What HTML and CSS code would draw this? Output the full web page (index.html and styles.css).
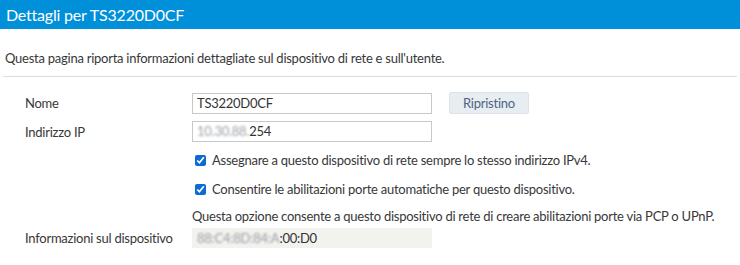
FILE: index.html
```html
<!DOCTYPE html>
<html lang="it">
<head>
<meta charset="utf-8">
<title>Dettagli per TS3220D0CF</title>
<link rel="stylesheet" href="styles.css">
</head>
<body>
<div class="page">
  <header class="titlebar">Dettagli per TS3220D0CF</header>
  <p class="intro">Questa pagina riporta informazioni dettagliate sul dispositivo di rete e sull'utente.</p>
  <div class="form">
    <div class="row row-name">
      <label class="label" for="nome">Nome</label>
      <div class="value">
        <input class="field" id="nome" type="text" value="TS3220D0CF">
        <button class="btn" type="button">Ripristino</button>
      </div>
    </div>
    <div class="row row-ip">
      <label class="label" for="ip">Indirizzo IP</label>
      <div class="value">
        <div class="field field-ip"><span class="blur">10.30.88.</span>254</div>
      </div>
    </div>
    <div class="row row-check">
      <span class="label"></span>
      <label class="value check"><input type="checkbox" checked> Assegnare a questo dispositivo di rete sempre lo stesso indirizzo IPv4.</label>
    </div>
    <div class="row row-check2">
      <span class="label"></span>
      <label class="value check"><input type="checkbox" checked> Consentire le abilitazioni porte automatiche per questo dispositivo.</label>
    </div>
    <div class="row row-hint">
      <span class="label"></span>
      <div class="value hint">Questa opzione consente a questo dispositivo di rete di creare abilitazioni porte via PCP o UPnP.</div>
    </div>
    <div class="row row-info">
      <span class="label">Informazioni sul dispositivo</span>
      <div class="value">
        <div class="field field-ro"><span class="blur">88:C4:8D:84:A</span>:00:D0</div>
      </div>
    </div>
  </div>
</div>
</body>
</html>
```
FILE: styles.css
```css
* { box-sizing: border-box; }
html, body { margin: 0; padding: 0; background: #fff; }
body {
  font-family: Lato, "Noto Sans", sans-serif;
  font-size: 13px;
  letter-spacing: -0.25px;
  color: #383838;
}
.page { width: 740px; height: 265px; overflow: hidden; }
.titlebar {
  height: 29px;
  background: #0090da;
  color: #fff;
  font-size: 16px;
  letter-spacing: -0.2px;
  line-height: 29px;
  padding-left: 6px;
}
.intro {
  margin: 0 3px;
  padding: 20px 2px 0;
  height: 48px;
  line-height: 18px;
  border-bottom: 1px solid #dcdcdc;
}
.form { padding-top: 15px; }
.row { display: flex; align-items: center; }
.label { width: 192px; padding-left: 25px; flex: none; }
.value { display: flex; align-items: center; }
.row-name { height: 22px; }
.row-ip { height: 21px; margin-top: 7px; }
.field {
  width: 240px;
  height: 21px;
  border: 1px solid #c8c8c8;
  padding: 0 4px;
  font: inherit;
  letter-spacing: inherit;
  color: #333;
  line-height: 19px;
  display: block;
}
.blur { color: #9aa0a6; filter: blur(1.2px); }
.btn {
  margin-left: 17px;
  width: 80px;
  height: 22px;
  background: #e8edf1;
  border: 1px solid #dde3e8;
  border-radius: 2px;
  color: #4d6580;
  font: inherit;
  letter-spacing: inherit;
  padding: 0;
}
.check { gap: 6px; }
.check input {
  margin: 0 0 0 3px;
  width: 11px;
  height: 11px;
  accent-color: #0c6ad6;
}
.row-check { height: 18px; margin-top: 9px; }
.row-check2 { height: 18px; margin-top: 11px; }
.row-hint { height: 18px; margin-top: 9px; }
.row-info { margin-top: 3px; height: 20px; }
.field-ro {
  height: 20px;
  background: #f2f2ef;
  border-color: #f2f2ef;
}
```
